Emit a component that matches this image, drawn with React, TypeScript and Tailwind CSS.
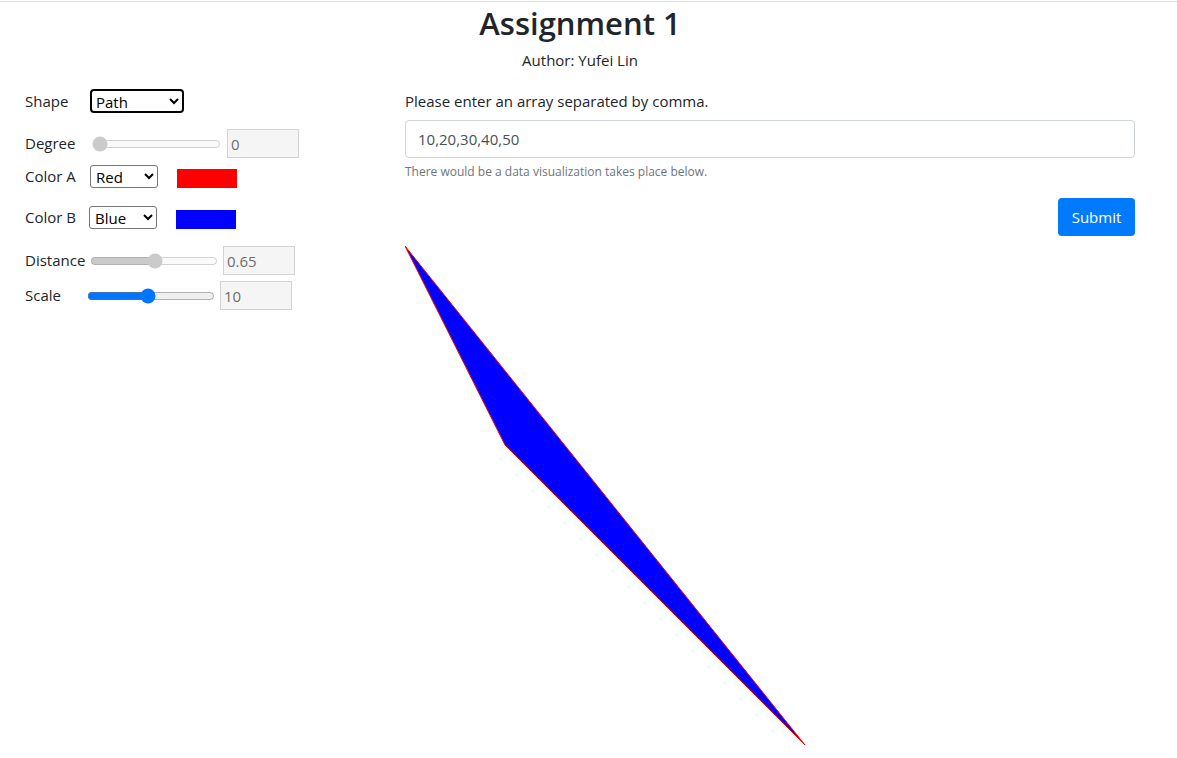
const font = { fontFamily: '"Open Sans", "Noto Sans", sans-serif' };

export default function App() {
  return (
    <div className="min-h-screen bg-white text-[#212529] pt-px" style={font}>
      <div className="border-t border-[#dcdcdc]">
        <div className="w-[1160px]">
          <h2 className="text-center text-[31px] font-semibold leading-[38px] mt-[2px]">Assignment 1</h2>
          <p className="text-center text-[15px] leading-6 mt-[6px]">Author: Yufei Lin</p>

          <div className="flex px-[25px] mt-[17px]">
            {/* controls */}
            <div className="w-[380px] shrink-0 text-[15px]">
              <div className="flex items-center h-[24px]">
                <span className="w-[65px]">Shape</span>
                <select
                  defaultValue="Path"
                  className="w-[94px] h-[24px] border-2 border-black rounded-[4px] pl-0 text-black"
                >
                  <option>Path</option>
                  <option>Circle</option>
                </select>
              </div>

              <div className="flex items-center h-[29px] mt-[16px]">
                <span className="w-[67px]">Degree</span>
                <input type="range" disabled defaultValue={0} className="w-[129px] m-0" />
                <input
                  disabled
                  value="0"
                  readOnly
                  className="ml-[6px] w-[72px] h-[29px] border border-[#d3d3d3] bg-[#f5f5f5] px-[3px] text-[#6d6d6d]"
                />
              </div>

              <div className="flex items-center h-[23px] mt-[7px]">
                <span className="w-[65px]">Color A</span>
                <select
                  defaultValue="Red"
                  className="w-[68px] h-[23px] border border-[#767676] rounded-[3px] pl-[1px] text-black"
                >
                  <option>Red</option>
                  <option>Blue</option>
                </select>
                <div className="ml-[19px] w-[60px] h-[19px] bg-[#ff0000] self-end" />
              </div>

              <div className="flex items-center h-[23px] mt-[18px]">
                <span className="w-[64px]">Color B</span>
                <select
                  defaultValue="Blue"
                  className="w-[68px] h-[23px] border border-[#767676] rounded-[3px] pl-[1px] text-black"
                >
                  <option>Red</option>
                  <option>Blue</option>
                </select>
                <div className="ml-[19px] w-[60px] h-[19px] bg-[#0000ff] self-end" />
              </div>

              <div className="flex items-center h-[29px] mt-[17px]">
                <span className="w-[65px]">Distance</span>
                <input type="range" disabled defaultValue={51} className="w-[128px] m-0" />
                <input
                  disabled
                  value="0.65"
                  readOnly
                  className="ml-[5px] w-[72px] h-[29px] border border-[#d3d3d3] bg-[#f5f5f5] px-[3px] text-[#6d6d6d]"
                />
              </div>

              <div className="flex items-center h-[29px] mt-[6px]">
                <span className="w-[62px]">Scale</span>
                <input type="range" defaultValue={47} className="w-[128px] m-0" />
                <input
                  disabled
                  value="10"
                  readOnly
                  className="ml-[5px] w-[72px] h-[29px] border border-[#d3d3d3] bg-[#f5f5f5] px-[3px] text-[#6d6d6d]"
                />
              </div>
            </div>

            {/* data input + chart */}
            <div className="flex-1 min-w-0">
              <label className="block text-[15px] leading-6">Please enter an array separated by comma.</label>
              <input
                defaultValue="10,20,30,40,50"
                className="mt-[7px] block w-full h-[38px] border border-[#ced4da] rounded-[4px] px-3 text-[15px] text-[#495057]"
              />
              <p className="mt-[4px] text-[12px] leading-[19px] text-[#6c757d]">
                There would be a data visualization takes place below.
              </p>
              <div className="flex justify-end mt-[17px]">
                <button className="w-[77px] h-[38px] rounded-[4px] bg-[#007bff] text-white text-[15px]">Submit</button>
              </div>
              <svg width="730" height="520" className="block mt-[4px]">
                <polygon points="0,6 100,205 400,505" fill="#0000ff" stroke="#ff0000" strokeWidth="1" />
              </svg>
            </div>
          </div>
        </div>
      </div>
    </div>
  );
}
